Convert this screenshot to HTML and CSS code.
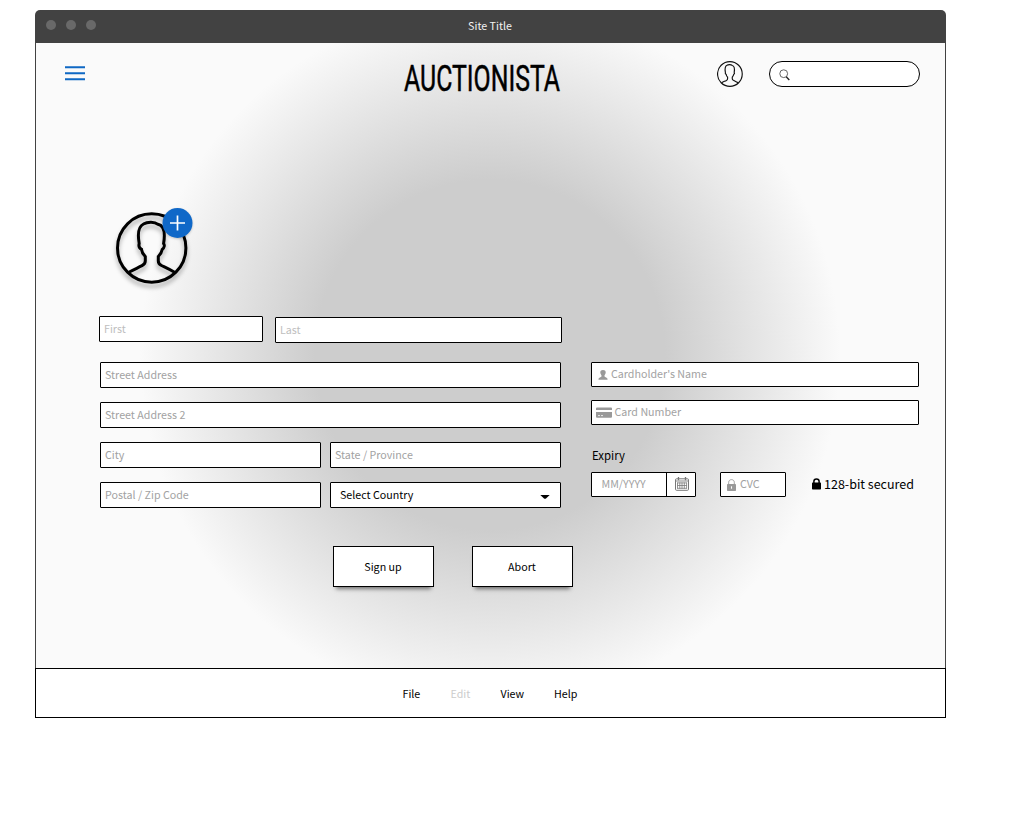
FILE: index.html
```html
<!DOCTYPE html>
<html lang="en">
<head>
<meta charset="utf-8">
<title>Auctionista</title>
<link rel="stylesheet" href="styles.css">
</head>
<body>
<svg class="defs" width="0" height="0">
  <symbol id="person" viewBox="0 0 72 72">
    <circle cx="35.700" cy="36" r="34.200"/>
    <path d="M12.800 60.300C18 57.500 22 55.800 26 53.700C28.800 52.200 29.300 51 29.300 49V44.500C26.800 42 25.800 40.500 25.500 37.300C23.500 36.300 22.500 34 23.200 31.500C21.500 22 22.500 14.500 27.500 12C31 9.800 38.500 9.200 42 12.300C48 13.500 49.500 20 47.600 31.500C48.800 33 48.500 35.500 46.300 37.300C45.700 40.500 45 42 42.300 44.500V49C42.300 51 43 52.300 45.500 53.500C50 55.700 54 57.500 59 60.500"/>
  </symbol>
</svg>
<div class="window">
  <header class="titlebar">
    <div class="dots"><i class="dot"></i><i class="dot"></i><i class="dot"></i></div>
    <span class="site-title">Site Title</span>
  </header>
  <main class="content">
    <nav class="topbar">
      <svg class="menu" width="20" height="15" viewBox="0 0 20 15"><path d="M0 1.200H20M0 7.200H20M0 13.200H20" stroke="#0f68c4" stroke-width="2"/></svg>
      <svg class="brand" width="160" height="50" viewBox="0 0 160 50"><text x="2" y="39" textLength="156" lengthAdjust="spacingAndGlyphs">AUCTIONISTA</text></svg>
      <svg class="user" width="26" height="26"><use href="#person"/></svg>
      <div class="search"><svg width="12" height="12" viewBox="0 0 12 12"><circle cx="4.700" cy="4.700" r="3.900" fill="none" stroke="#555" stroke-width=".9"/><path d="M7.200 7.700L10.300 10.900" stroke="#222" stroke-width="1.400"/></svg></div>
    </nav>
    <div class="avatar">
      <svg class="avatar-icon" width="72" height="72"><use href="#person"/></svg>
      <svg class="add" width="31" height="30" viewBox="0 0 31 30"><circle cx="15.500" cy="15" r="15" fill="#0f68c8"/><path d="M8 15H23M15.500 7.500V22.500" stroke="#fff" stroke-width="1.700"/></svg>
    </div>
    <div class="names">
      <div class="field first">First</div>
      <div class="field last">Last</div>
    </div>
    <div class="columns">
      <section class="address">
        <div class="field wide">Street Address</div>
        <div class="field wide">Street Address 2</div>
        <div class="field">City</div>
        <div class="field">State / Province</div>
        <div class="field">Postal / Zip Code</div>
        <div class="field select">Select Country<svg width="10" height="5" viewBox="0 0 10 5"><path d="M.3 0H9.700L6 3.400Q5 4.300 4 3.400Z"/></svg></div>
      </section>
      <section class="payment">
        <div class="field holder"><svg width="10" height="10" viewBox="0 0 10 10"><path d="M5 0C2.900 0 2.100 1.200 2.300 2.800C2.500 4.300 3.500 4.900 3.600 5.900C3.600 7.200 1.200 7 .8 8.500H9.200C8.800 7 6.400 7.200 6.400 5.900C6.500 4.900 7.500 4.300 7.700 2.800C7.900 1.200 7.100 0 5 0ZM.5 8.500H9.500V9.700H.5Z" fill="#999"/></svg>Cardholder's Name</div>
        <div class="field number"><svg width="16" height="11" viewBox="0 0 16 11"><path d="M1 .4H15Q16 .4 16 1.400V3H0V1.400Q0 .4 1 .4ZM0 5H16V9.800Q16 10.800 15 10.800H1Q0 10.800 0 9.800Z" fill="#999"/><path d="M2 8.600H4M5 8.600H7" stroke="#fff" stroke-width=".8"/></svg>Card Number</div>
        <div class="expiry">Expiry</div>
        <div class="card-row">
          <div class="field date"><span>MM/YYYY</span><i class="calendar"><svg width="14" height="14" viewBox="0 0 14 14"><rect x=".5" y="1.800" width="13" height="11.500" rx="1" fill="none" stroke="#777"/><path d="M.5 4H13.500" stroke="#888"/><path d="M3.500 0V3.200M10.500 0V3.200" stroke="#777" stroke-width="1.300"/><path d="M2.300 5.900H11.800M2.300 8.500H11.800M2.300 11.300H11.800M2.500 5.500V11.700M4.800 5.500V11.700M7 5.500V11.700M9.300 5.500V11.700M11.600 5.500V11.700" stroke="#777" stroke-width=".8"/></svg></i></div>
          <div class="field cvc"><svg width="9" height="12" viewBox="0 0 9 12"><path d="M1.700 5.500V3.200C1.700-.2 7.300-.2 7.300 3.200V5.500" fill="none" stroke="#999" stroke-width=".9"/><rect y="5" width="9" height="7" rx=".7" fill="#999"/><path d="M4.500 7.300V9.700" stroke="#fff" stroke-width="1.100"/></svg>CVC</div>
          <div class="secured"><svg width="9" height="12" viewBox="0 0 9 12"><path d="M1.900 6V3.300C1.900.1 7.100.1 7.100 3.300V6" fill="none" stroke="#000" stroke-width="1.500"/><rect y="4.500" width="9" height="7" rx=".7"/></svg>128-bit secured</div>
        </div>
      </section>
    </div>
    <div class="actions">
      <div class="button">Sign up</div>
      <div class="button">Abort</div>
    </div>
  </main>
  <footer class="footer">
    <span class="file">File</span><span class="edit">Edit</span><span class="view">View</span><span class="help">Help</span>
  </footer>
</div>
</body>
</html>
```
FILE: styles.css
```css
* { box-sizing: border-box; }
body { margin: 0; background: #fff; font: 10.700px/16px "Noto Sans CJK SC", "Noto Sans", sans-serif; color: #000; overflow: hidden; }
svg { display: block; flex: none; }
.defs { position: absolute; }
.window { width: 911px; height: 708px; margin: 10px 0 0 35px; display: flex; flex-direction: column; }
.titlebar { height: 33px; background: #424242; border-radius: 5px 5px 0 0; display: grid; grid-template-columns: 1fr auto 1fr; }
.dots { display: flex; gap: 10px; padding: 10px 0 0 11.300px; }
.dot { width: 10px; height: 10px; border-radius: 50%; background: #696969; }
.site-title { color: #f2f2f2; padding: 8px 1px 0 0; }
.content { height: 625px; border: solid #424242; border-width: 0 1px; background: radial-gradient(circle 350px at 454px 312px, #cdcdcd 50%, #fafafa 100%); }
.topbar { display: flex; height: 60px; padding-left: 29px; }
.menu { margin-top: 23px; }
.brand { margin: 9px 0 0 317px; overflow: visible; }
.brand text { font: 400 36.500px Roboto, sans-serif; stroke: #000; stroke-width: .5; }
.user { margin: 17.500px 0 0 155px; fill: none; stroke: #111; stroke-width: 3.200; overflow: visible; }
.search { width: 151px; height: 26px; margin: 18px 0 0 26px; border: 1px solid #000; border-radius: 13px; background: #fff; padding: 7px 0 0 9.300px; }
.avatar { position: relative; width: 72px; height: 72px; margin: 109px 0 0 80px; }
.avatar-icon { fill: none; stroke: #000; stroke-width: 3; filter: drop-shadow(0 4px 2px rgba(0,0,0,.3)); overflow: visible; }
.add { position: absolute; left: 46px; top: -4px; filter: drop-shadow(0 1px 1px rgba(0,0,0,.2)); }
.field { height: 26px; border: 1px solid #000; border-radius: 1px; background: #fff; color: #a2a2a2; padding: 0 0 0 4px; display: flex; align-items: center; white-space: nowrap; }
.names { display: flex; gap: 12px; margin: 32px 0 0 63px; }
.first { width: 164px; color: #bebebe; }
.last { width: 287px; margin-top: 1px; color: #bebebe; }
.columns { display: flex; gap: 30px; margin: 19px 0 0 64px; }
.address { width: 461px; display: grid; grid-template-columns: 221px 231px; gap: 14px 9px; align-content: start; }
.wide { grid-column: span 2; }
.select { color: #000; padding: 0 10px 0 9px; justify-content: space-between; }
.select svg { margin-top: 4px; }
.payment { width: 328px; }
.payment .field { height: 25px; }
.holder { padding-left: 6px; gap: 3px; margin-bottom: 13px; }
.payment .holder, .payment .number { padding-bottom: 1px; }
.holder svg { margin-top: 2px; }
.number { gap: 2.500px; }
.number svg { margin-top: 1px; }
.expiry { font-size: 11.400px; margin: 22px 0 9px 1px; }
.card-row { display: flex; }
.payment .date { width: 105px; padding: 0 0 0 9.500px; justify-content: space-between; }
.date span { padding-bottom: 1px; }
.calendar { width: 29px; height: 23px; border-left: 1px solid #000; padding: 4px 0 0 8px; }
.payment .cvc { width: 66px; margin-left: 24px; padding: 0 0 1px 6px; gap: 4px; }
.cvc svg { margin-top: 2px; }
.secured { display: flex; align-items: center; gap: 3px; margin-left: 26px; padding-bottom: 2px; font-size: 12.500px; white-space: nowrap; }
.actions { display: flex; gap: 38px; margin: 38px 0 0 297px; }
.button { width: 101px; height: 41px; border: 1px solid #000; background: #fff; display: grid; place-items: center; padding: 0 1px 0 0; box-shadow: 0 5px 4px -3px rgba(0,0,0,.5); }
.footer { height: 50px; border: 1px solid #000; display: flex; padding: 17px 0 0 366.500px; }
.file { width: 48px; }
.edit { width: 50px; color: #ccc; }
.view { width: 53.500px; }
```
